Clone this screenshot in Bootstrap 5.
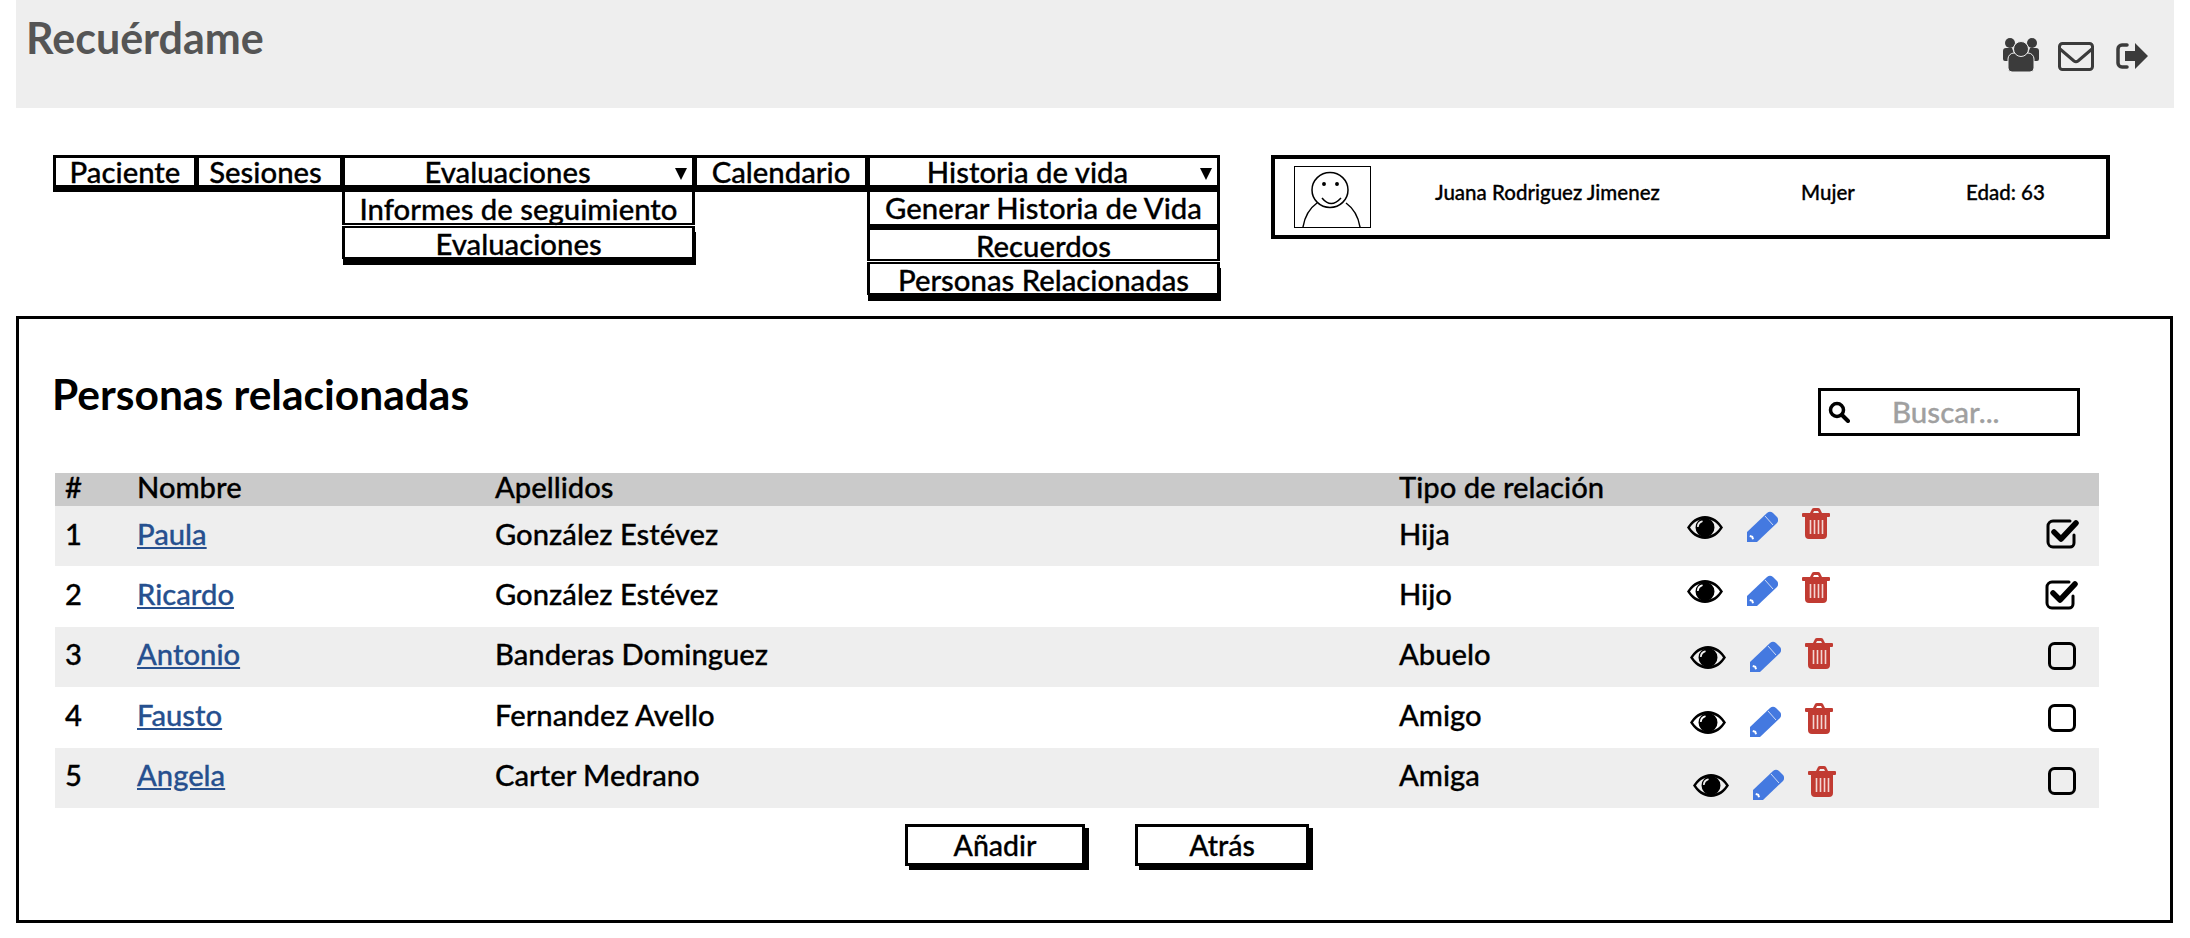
<!doctype html>
<html lang="es">
<head>
<meta charset="utf-8">
<title>Recuérdame</title>
<link href="https://cdn.jsdelivr.net/npm/bootstrap@5.3.0/dist/css/bootstrap.min.css" rel="stylesheet">
<style>
html,body{background:#fff;margin:0;}
body{font-family:"Lato","Noto Sans",sans-serif;font-weight:500;color:#000;height:938px;overflow:hidden;-webkit-text-stroke:.3px currentColor;}
.app-head{height:108px;margin:0 16px;padding:14px 26px 0 10px;background:#eee;color:#555;}
.app-title{font-size:43px;line-height:48px;font-weight:700;margin:0;color:#555;-webkit-text-stroke:0;}
.head-icons{padding-top:24px;gap:19px;}
.head-icons svg{display:block;}
.head-icons .ic-mail{margin-top:4px;}
.head-icons .ic-out{margin-top:5px;margin-left:3px;}
.top-zone{height:208px;padding:47px 0 0 54px;}
.menu-col{display:flex;flex-direction:column;}
.w-a{width:143px}.w-b{width:146px}.w-c{width:352px;margin-left:0}.w-d{width:173px}.w-e{width:352px}
.mi{position:relative;display:flex;align-items:center;justify-content:center;height:33px;border:3px solid #000;background:#fff;font-size:29.3px;line-height:1;white-space:nowrap;margin-left:-1px;}
.mi-top{height:33px;box-shadow:0 4px 0 #000;margin-bottom:4px;padding-top:1px;}
.mi-sub{margin-bottom:1px;border-top-width:2px;border-bottom-width:2px;padding-top:2px;}
.mi-first{border-top-width:0;}
.mi-gap{height:36px;border-top-width:0;border-bottom-width:4px;}
.mi-last{box-shadow:1px 6px 0 #000;border-top-width:2px;border-bottom-width:2px;padding-top:2px;}
.mi-shift-b{padding-right:8px;}
.mi-shift-c{padding-right:22px;}
.mi-shift-e{padding-right:32px;}
.caret-mark{position:absolute;right:5px;top:10px;width:0;height:0;border-left:6px solid transparent;border-right:6px solid transparent;border-top:12px solid #000;}
.pat-box{width:839px;height:84px;margin-left:51px;border:4px solid #000;padding:7px 0 0 19px;font-size:20.5px;}
.pat-box svg{display:block;flex:none;}
.pat-name{margin-left:64px;width:366px;padding-top:11px;}
.pat-sex{width:165px;padding-top:11px;}
.pat-age{padding-top:11px;}
.main-panel{height:607px;margin:0 17px 0 16px;border:3px solid #000;padding:0 0 0 36px;}
.panel-top{height:154px;padding-right:90px;}
.panel-title{font-size:42.5px;line-height:50px;font-weight:700;margin:0 0 0 -3px;padding-top:50px;-webkit-text-stroke:0;}
.search-box{width:262px;height:48px;margin-top:69px;border:3px solid #000;padding:0 0 0 7px;color:#a0a0a0;font-size:29.5px;}
.search-box span{margin-left:42px;}
.people{width:2044px;table-layout:fixed;border-collapse:collapse;margin:0;font-size:29.2px;line-height:1;}
.people th,.people td{padding:0 0 6px 10px;border:0;box-shadow:none;background:transparent;font-weight:500;vertical-align:middle;color:#000;}
.people th{padding-bottom:5px;line-height:26px;}
.people thead tr{height:33px;background:#cacaca;}
.people tbody tr:nth-child(odd){background:#eee;}
.people tbody tr{height:60.4px;}
.people a{color:#26508f;}
.people td.tools,.people td.tick{vertical-align:top;padding:0 0 0 10px;}
.tool-row{gap:24px;}
.tool-row svg{display:block;flex:none;}
.ic-eye{margin-top:8px;}
.ic-pen{margin-top:3px;}
.p1{padding-top:2px}.p2{padding-top:6px}.p3{padding:11px 0 0 3px}.p4{padding:16px 0 0 3px}.p5{padding:18px 0 0 6px}
.k1{padding:13px 0 0 1px}.k2{padding:14px 0 0 0}.k3{padding:15px 0 0 3px}.k4{padding:17px 0 0 3px}.k5{padding:19px 0 0 3px}
.tick svg{display:block;}
.act-row{padding-top:16px;padding-right:72px;padding-left:0;}
.sk-btn{width:180px;height:42px;padding:0;margin:0;border:3px solid #000;border-radius:0;background:#fff;color:#000;box-shadow:4px 4px 0 #000;font-size:28.5px;line-height:1;font-weight:500;}
.sk-btn:hover{background:#fff;color:#000;border-color:#000;}
.btn-one{margin-left:850px;}
.btn-two{margin-left:50px;width:174px;}
</style>
</head>
<body>
<header class="app-head d-flex justify-content-between">
  <h1 class="app-title">Recuérdame</h1>
  <div class="head-icons d-flex align-items-start">
    <svg width="36" height="34" viewBox="0 0 36 34" fill="#3b3b3b" aria-hidden="true">
      <circle cx="7" cy="5" r="5"/><circle cx="29" cy="5" r="5"/>
      <path d="M0 13a3 3 0 0 1 3-3h6l3 8-5 5H2a2 2 0 0 1-2-2zM36 13a3 3 0 0 0-3-3h-6l-3 8 5 5h5a2 2 0 0 0 2-2z"/>
      <path d="M5 21a6 6 0 0 1 6-6h14a6 6 0 0 1 6 6v9a4 4 0 0 1-4 4H9a4 4 0 0 1-4-4z" stroke="#eee" stroke-width="1"/>
      <circle cx="18" cy="11" r="7.5" stroke="#eee" stroke-width="1"/>
    </svg>
    <svg class="ic-mail" width="36" height="29" viewBox="0 0 36 29" fill="none" stroke="#3b3b3b" stroke-width="3" aria-hidden="true">
      <rect x="1.5" y="1.5" width="33" height="26" rx="3"/>
      <path d="M2 7l14 12q2 1.500 4 0l14-12"/>
    </svg>
    <svg class="ic-out" width="32" height="26" viewBox="0 0 32 26" aria-hidden="true">
      <path d="M11 2H6a4 4 0 0 0-4 4v14a4 4 0 0 0 4 4h5" fill="none" stroke="#3b3b3b" stroke-width="3.500" stroke-linecap="round"/>
      <path d="M9 8h10V0l13 13-13 13v-8H9z" fill="#3b3b3b"/>
    </svg>
  </div>
</header>

<section class="top-zone d-flex align-items-start">
  <nav class="d-flex align-items-start">
    <div class="menu-col w-a"><div class="mi mi-top">Paciente</div></div>
    <div class="menu-col w-b"><div class="mi mi-top mi-shift-b">Sesiones</div></div>
    <div class="menu-col w-c">
      <div class="mi mi-top mi-shift-c">Evaluaciones<i class="caret-mark"></i></div>
      <div class="mi mi-sub mi-first">Informes de seguimiento</div>
      <div class="mi mi-last">Evaluaciones</div>
    </div>
    <div class="menu-col w-d"><div class="mi mi-top">Calendario</div></div>
    <div class="menu-col w-e">
      <div class="mi mi-top mi-shift-e">Historia de vida<i class="caret-mark"></i></div>
      <div class="mi mi-gap">Generar Historia de Vida</div>
      <div class="mi mi-sub">Recuerdos</div>
      <div class="mi mi-last">Personas Relacionadas</div>
    </div>
  </nav>
  <div class="pat-box d-flex">
    <svg width="77" height="62" viewBox="0 0 77 62" fill="none" stroke="#000" stroke-width="1.500" aria-hidden="true">
      <rect x=".5" y=".5" width="76" height="61" stroke-width="1"/>
      <ellipse cx="36" cy="24" rx="18" ry="17.500"/>
      <circle cx="30" cy="18" r="1.200" fill="#000"/><circle cx="43" cy="18" r="1.200" fill="#000"/>
      <path d="M28 32q9 11 19 0"/>
      <path d="M9 61c2-12 7-19 14-24M66 61c-2-12-7-19-14-24"/>
    </svg>
    <div class="pat-name">Juana Rodriguez Jimenez</div>
    <div class="pat-sex">Mujer</div>
    <div class="pat-age">Edad: 63</div>
  </div>
</section>

<main class="main-panel">
  <div class="panel-top d-flex justify-content-between align-items-start">
    <h2 class="panel-title">Personas relacionadas</h2>
    <div class="search-box d-flex align-items-center">
      <svg width="22" height="22" viewBox="0 0 22 22" fill="none" stroke="#000" aria-hidden="true"><circle cx="9" cy="9" r="6.500" stroke-width="3.500"/><path d="M14 14l6 6" stroke-width="4" stroke-linecap="round"/></svg>
      <span>Buscar...</span>
    </div>
  </div>

  <svg width="0" height="0" class="d-block" aria-hidden="true">
    <defs>
      <g id="t-eye"><path fill-rule="evenodd" d="M18 0c8 0 14 5 18 11.500C32 18 26 23 18 23S4 18 0 11.500C4 5 10 0 18 0zm0 3C11 3 6 7 3 11.500 6 16 11 20 18 20s12-4 15-8.500C30 7 25 3 18 3z"/><path fill-rule="evenodd" d="M18 2a9.500 9.500 0 1 1 0 19 9.500 9.500 0 0 1 0-19zm-3 2.500c-3 .5-5 3-5 6 0 .8 1.600.8 1.800 0 .2-2 1.600-3.600 3.400-4.200.8-.3.6-2-.2-1.800z"/></g>
      <g id="t-pen"><path fill="#4479e0" d="M0 21 20 2q3-2.500 6 0l4 4q2.500 3 0 6L10 31H0z"/><path d="M18 5l8 9" stroke="#cfdcf6" stroke-width="1"/><path d="M3 24l3 1 1 3-2 .5-.5-2-2-.5z" fill="#fff"/></g>
      <g id="t-bin"><path fill="#c13b32" d="M8 5l2-4q.5-1 2-1h4q1.500 0 2 1l2 4h7a1 1 0 0 1 1 1v2a1 1 0 0 1-1 1h-2v18a4 4 0 0 1-4 4H7a4 4 0 0 1-4-4V9H1a1 1 0 0 1-1-1V6a1 1 0 0 1 1-1zm3 0h6l-1-2h-4z"/><path stroke="#f3d6d3" stroke-width="1.600" d="M8.500 12v14M12.500 12v14M16.500 12v14M20.500 12v14" fill="none"/></g>
      <g id="t-on"><path fill="none" stroke="#000" stroke-width="3" stroke-linecap="round" d="M24 2H7a5 5 0 0 0-5 5v16a5 5 0 0 0 5 5h17a4 4 0 0 0 4-4v-8"/><path fill="none" stroke="#000" stroke-width="5.500" stroke-linecap="round" stroke-linejoin="round" d="M8 13l7 7L30 4"/></g>
      <g id="t-off"><rect x="1.500" y="1.500" width="25" height="25" rx="5" fill="none" stroke="#000" stroke-width="3"/></g>
    </defs>
  </svg>

  <table class="table people">
    <colgroup><col style="width:72px"><col style="width:358px"><col style="width:904px"><col style="width:288px"><col style="width:358px"><col style="width:64px"></colgroup>
    <thead><tr><th>#</th><th>Nombre</th><th>Apellidos</th><th>Tipo de relación</th><th></th><th></th></tr></thead>
    <tbody>
      <tr><td>1</td><td><a href="#">Paula</a></td><td>González Estévez</td><td>Hija</td>
        <td class="tools"><div class="tool-row d-flex p1"><svg class="ic-eye" width="36" height="23"><use href="#t-eye"/></svg><svg class="ic-pen" width="31" height="31"><use href="#t-pen"/></svg><svg width="28" height="31"><use href="#t-bin"/></svg></div></td>
        <td class="tick"><div class="k1"><svg width="33" height="30"><use href="#t-on"/></svg></div></td></tr>
      <tr><td>2</td><td><a href="#">Ricardo</a></td><td>González Estévez</td><td>Hijo</td>
        <td class="tools"><div class="tool-row d-flex p2"><svg class="ic-eye" width="36" height="23"><use href="#t-eye"/></svg><svg class="ic-pen" width="31" height="31"><use href="#t-pen"/></svg><svg width="28" height="31"><use href="#t-bin"/></svg></div></td>
        <td class="tick"><div class="k2"><svg width="33" height="30"><use href="#t-on"/></svg></div></td></tr>
      <tr><td>3</td><td><a href="#">Antonio</a></td><td>Banderas Dominguez</td><td>Abuelo</td>
        <td class="tools"><div class="tool-row d-flex p3"><svg class="ic-eye" width="36" height="23"><use href="#t-eye"/></svg><svg class="ic-pen" width="31" height="31"><use href="#t-pen"/></svg><svg width="28" height="31"><use href="#t-bin"/></svg></div></td>
        <td class="tick"><div class="k3"><svg width="28" height="28"><use href="#t-off"/></svg></div></td></tr>
      <tr><td>4</td><td><a href="#">Fausto</a></td><td>Fernandez Avello</td><td>Amigo</td>
        <td class="tools"><div class="tool-row d-flex p4"><svg class="ic-eye" width="36" height="23"><use href="#t-eye"/></svg><svg class="ic-pen" width="31" height="31"><use href="#t-pen"/></svg><svg width="28" height="31"><use href="#t-bin"/></svg></div></td>
        <td class="tick"><div class="k4"><svg width="28" height="28"><use href="#t-off"/></svg></div></td></tr>
      <tr><td>5</td><td><a href="#">Angela</a></td><td>Carter Medrano</td><td>Amiga</td>
        <td class="tools"><div class="tool-row d-flex p5"><svg class="ic-eye" width="36" height="23"><use href="#t-eye"/></svg><svg class="ic-pen" width="31" height="31"><use href="#t-pen"/></svg><svg width="28" height="31"><use href="#t-bin"/></svg></div></td>
        <td class="tick"><div class="k5"><svg width="28" height="28"><use href="#t-off"/></svg></div></td></tr>
    </tbody>
  </table>

  <div class="act-row d-flex">
    <button type="button" class="btn sk-btn btn-one">Añadir</button>
    <button type="button" class="btn sk-btn btn-two">Atrás</button>
  </div>
</main>
<script src="https://cdn.jsdelivr.net/npm/bootstrap@5.3.0/dist/js/bootstrap.bundle.min.js"></script>
</body>
</html>
